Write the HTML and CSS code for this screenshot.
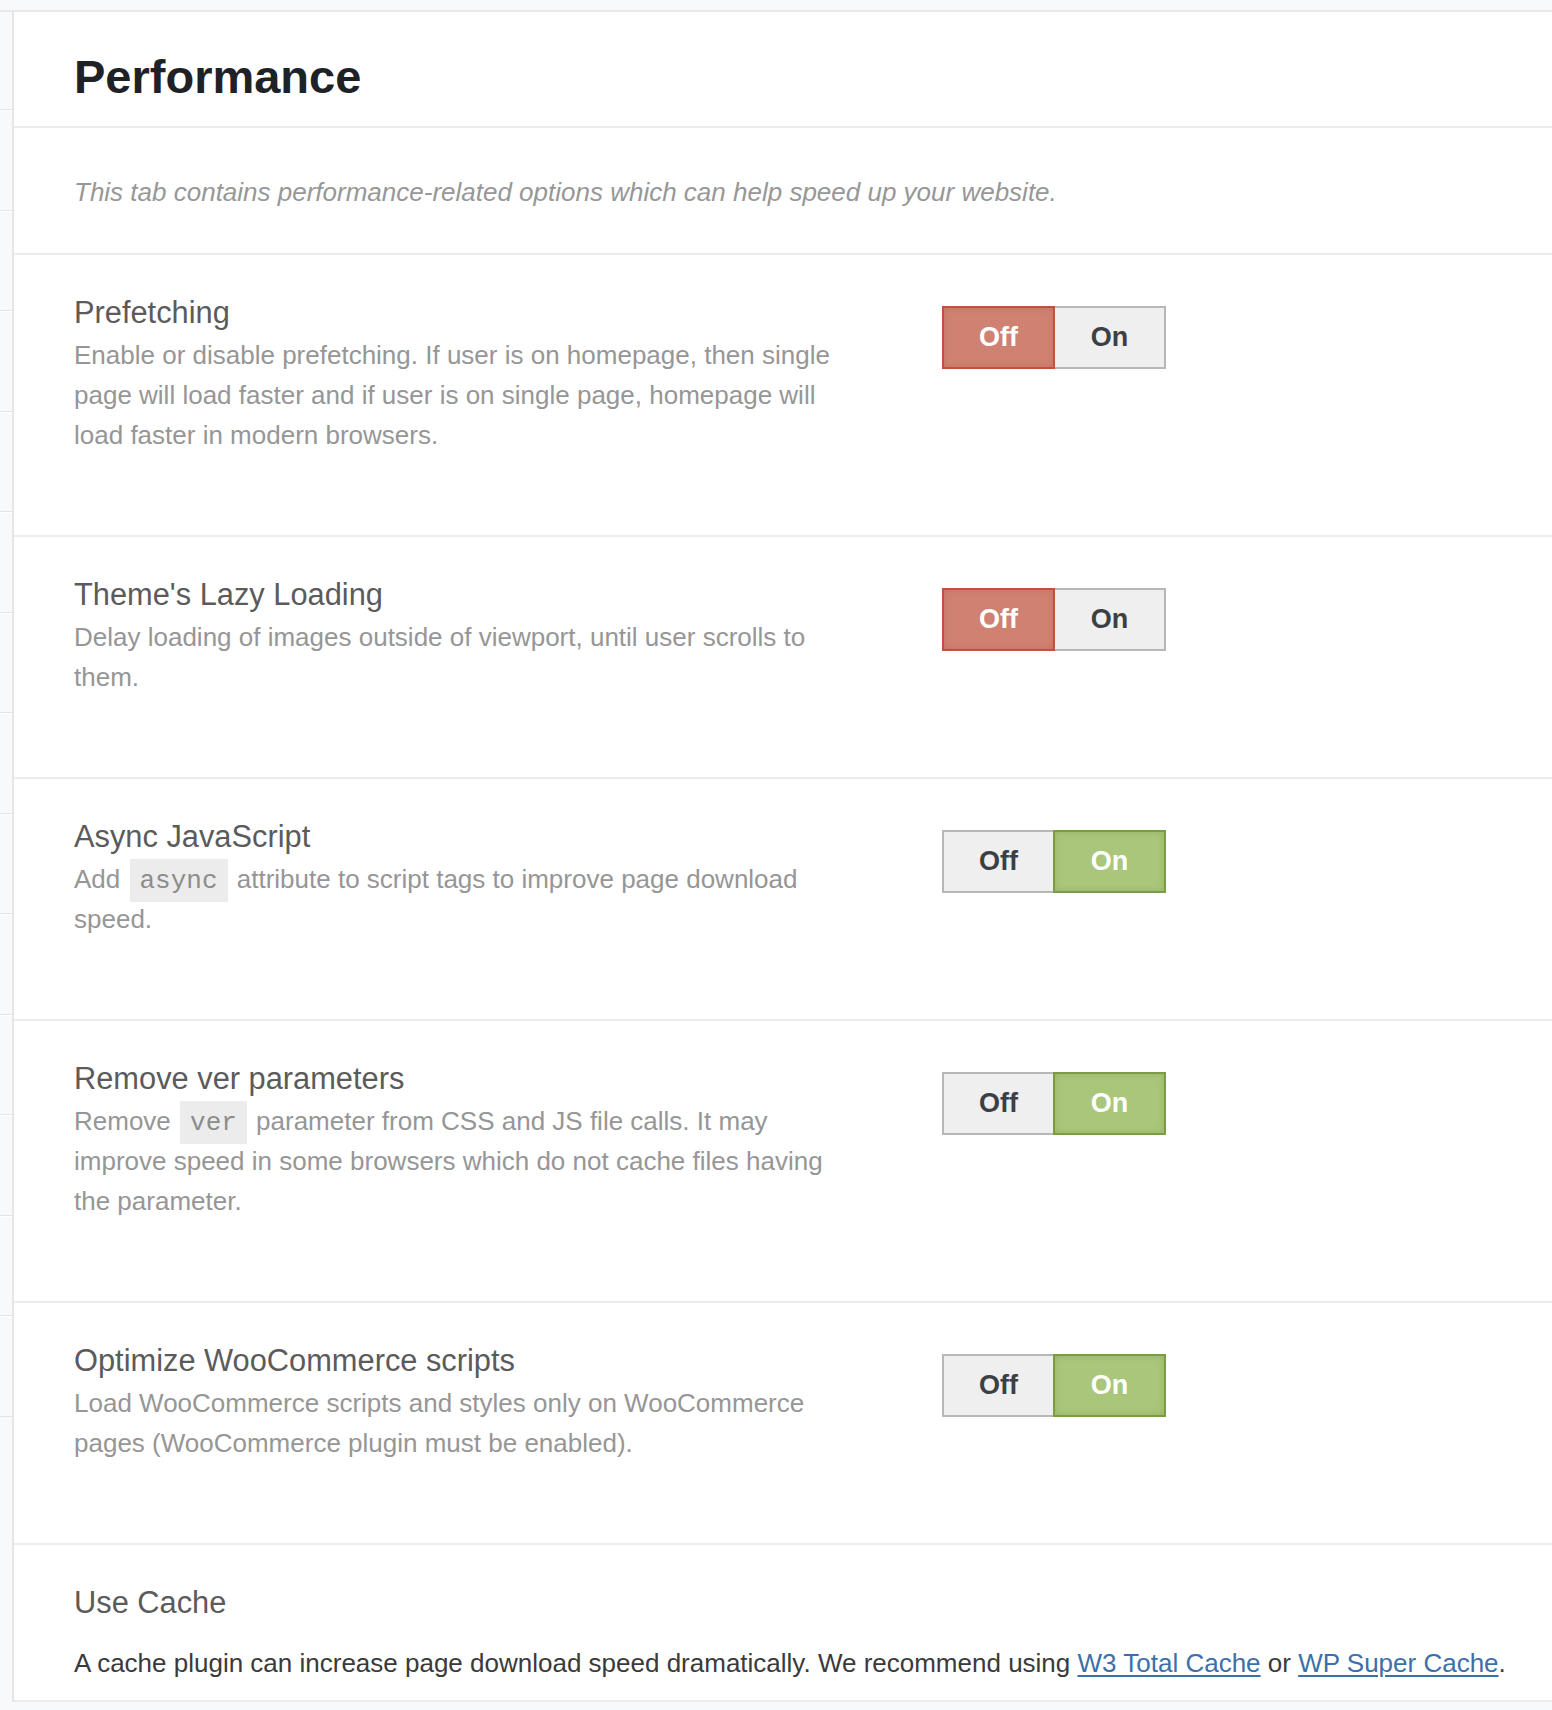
FILE: index.html
```html
<!DOCTYPE html>
<html lang="en">
<head>
<meta charset="utf-8">
<title>Performance</title>
<link rel="stylesheet" href="styles.css">
</head>
<body>
<div class="topbar"></div>
<div class="layout">
  <nav class="sidenav">
    <div class="nav-item"></div><div class="nav-item"></div><div class="nav-item"></div><div class="nav-item"></div>
    <div class="nav-item"></div><div class="nav-item"></div><div class="nav-item"></div><div class="nav-item"></div>
    <div class="nav-item"></div><div class="nav-item"></div><div class="nav-item"></div><div class="nav-item"></div>
    <div class="nav-item"></div><div class="nav-item"></div>
  </nav>
  <main class="panel">
    <header class="panel-head">
      <h1 class="panel-title">Performance</h1>
    </header>
    <section class="intro">
      <p>This tab contains performance-related options which can help speed up your website.</p>
    </section>

    <section class="option">
      <div class="option-text">
        <h3 class="option-title">Prefetching</h3>
        <p class="option-desc">Enable or disable prefetching. If user is on homepage, then single page will load faster and if user is on single page, homepage will load faster in modern browsers.</p>
      </div>
      <div class="switch">
        <span class="switch-btn off active">Off</span><span class="switch-btn on">On</span>
      </div>
    </section>

    <section class="option">
      <div class="option-text">
        <h3 class="option-title">Theme's Lazy Loading</h3>
        <p class="option-desc">Delay loading of images outside of viewport, until user scrolls to them.</p>
      </div>
      <div class="switch">
        <span class="switch-btn off active">Off</span><span class="switch-btn on">On</span>
      </div>
    </section>

    <section class="option">
      <div class="option-text">
        <h3 class="option-title">Async JavaScript</h3>
        <p class="option-desc">Add <code>async</code> attribute to script tags to improve page download speed.</p>
      </div>
      <div class="switch">
        <span class="switch-btn off">Off</span><span class="switch-btn on active">On</span>
      </div>
    </section>

    <section class="option">
      <div class="option-text">
        <h3 class="option-title">Remove ver parameters</h3>
        <p class="option-desc">Remove <code>ver</code> parameter from CSS and JS file calls. It may improve speed in some browsers which do not cache files having the parameter.</p>
      </div>
      <div class="switch">
        <span class="switch-btn off">Off</span><span class="switch-btn on active">On</span>
      </div>
    </section>

    <section class="option">
      <div class="option-text">
        <h3 class="option-title">Optimize WooCommerce scripts</h3>
        <p class="option-desc">Load WooCommerce scripts and styles only on WooCommerce pages (WooCommerce plugin must be enabled).</p>
      </div>
      <div class="switch">
        <span class="switch-btn off">Off</span><span class="switch-btn on active">On</span>
      </div>
    </section>

    <section class="cache">
      <h3 class="option-title">Use Cache</h3>
      <p class="cache-text">A cache plugin can increase page download speed dramatically. We recommend using <a href="#">W3 Total Cache</a> or <a href="#">WP Super Cache</a>.</p>
    </section>
  </main>
</div>
<div class="bottombar"></div>
</body>
</html>
```

FILE: styles.css
```css
* { box-sizing: border-box; }

html, body {
  margin: 0;
  padding: 0;
  background: #f8f9fb;
  font-family: "Liberation Sans", Arial, Helvetica, sans-serif;
}

.topbar {
  height: 12px;
  background: #f8f9fb;
  border-bottom: 2px solid #e8e9eb;
}

.layout {
  display: flex;
  align-items: stretch;
}

.sidenav {
  flex: 0 0 14px;
  width: 14px;
  background: #f8f9fb;
  border-right: 2px solid #e6e6e6;
  display: flex;
  flex-direction: column;
}

.nav-item {
  height: 100.5px;
  border-bottom: 1px solid #e4e4e4;
  box-shadow: inset 0 1px 0 #ffffff;
}
.nav-item:first-child { height: 98px; box-shadow: none; }

.panel {
  flex: 1;
  background: #ffffff;
  min-width: 0;
}

.panel-head {
  padding: 37px 60px 22px;
  border-bottom: 2px solid #ececec;
}

.panel-title {
  margin: 0;
  font-size: 47px;
  line-height: 55px;
  font-weight: 700;
  color: #1e2226;
}

.intro {
  padding: 44px 60px 41px;
  border-bottom: 2px solid #ececec;
}

.intro p {
  margin: 0;
  font-size: 26px;
  line-height: 40px;
  font-style: italic;
  color: #979797;
}

.option {
  display: flex;
  align-items: flex-start;
  padding: 40px 60px 80px;
  border-bottom: 2px solid #ececec;
}

.option-text {
  flex: 0 0 772px;
  width: 772px;
  margin-right: 96px;
}

.option-title {
  margin: 0;
  font-size: 30.8px;
  line-height: 36px;
  font-weight: 400;
  color: #5b5b5b;
}

.option-desc {
  margin: 4px 0 0;
  font-size: 26px;
  line-height: 40px;
  color: #969696;
}

code {
  font-family: "Liberation Mono", "DejaVu Sans Mono", monospace;
  font-size: 26px;
  line-height: 1;
  background: #ececec;
  color: #8c8c8c;
  padding: 7px 10px 6px;
  margin: 0 2px;
}

.switch {
  display: flex;
  margin-top: 11px;
}

.switch-btn {
  position: relative;
  width: 113px;
  height: 63px;
  display: flex;
  align-items: center;
  justify-content: center;
  font-size: 27px;
  font-weight: 700;
  color: #3c4044;
  background: #efefef;
  border: 2px solid #b7b7b7;
}

.switch-btn + .switch-btn { margin-left: -2px; }

.switch-btn.active { z-index: 1; color: #ffffff; }

.switch-btn.off.active {
  background: #cf8272;
  border-color: #c1513d;
  box-shadow: inset 0 0 6px rgba(180, 80, 60, 0.35);
}

.switch-btn.on.active {
  background: #a9c67b;
  border-color: #7b9b47;
  box-shadow: inset 0 0 6px rgba(110, 140, 60, 0.35);
}

.cache {
  padding: 40px 20px 17px 60px;
  border-bottom: 2px solid #ececec;
}

.cache-text {
  margin: 22px 0 0;
  font-size: 26px;
  line-height: 40px;
  color: #3a3a3a;
  white-space: nowrap;
}

.cache-text a {
  color: #3d6fa8;
  text-decoration: underline;
  text-underline-offset: 3px;
}

.bottombar {
  height: 8px;
  background: #f8f9fb;
}
```
